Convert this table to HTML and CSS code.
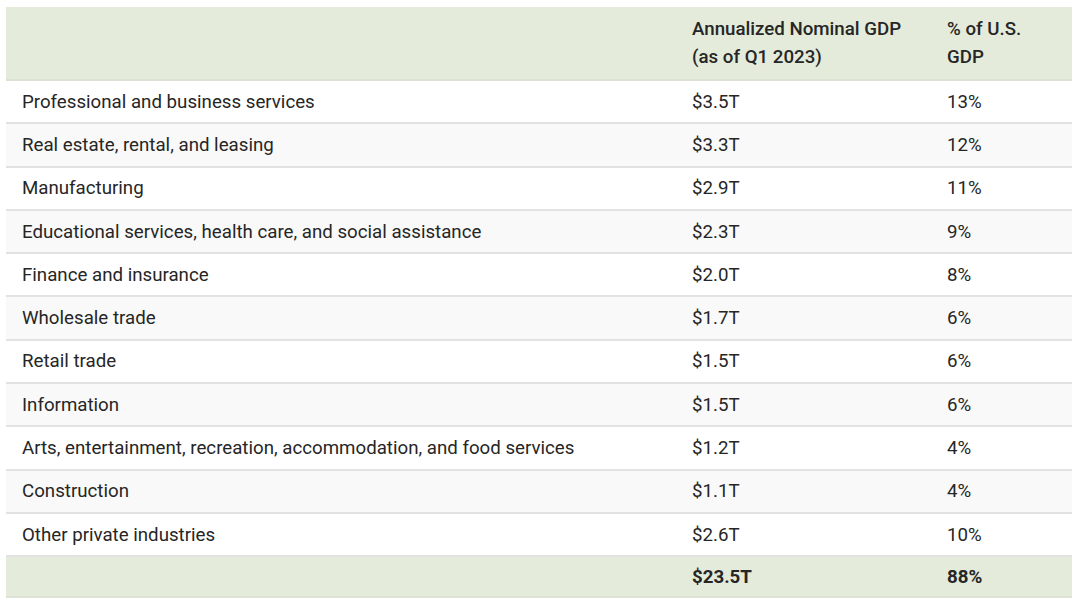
FILE: index.html
```html
<!DOCTYPE html>
<html>
<head>
<meta charset="utf-8">
<link rel="stylesheet" href="styles.css">
</head>
<body>
<div class="wrap">
<table class="gdp">
<colgroup><col class="k1"><col class="k2"><col class="k3"></colgroup>
<thead>
<tr><th></th><th>Annualized Nominal GDP<br>(as of Q1 2023)</th><th>% of U.S.<br>GDP</th></tr>
</thead>
<tbody>
<tr><td>Professional and business services</td><td>$3.5T</td><td>13%</td></tr>
<tr><td>Real estate, rental, and leasing</td><td>$3.3T</td><td>12%</td></tr>
<tr><td>Manufacturing</td><td>$2.9T</td><td>11%</td></tr>
<tr><td>Educational services, health care, and social assistance</td><td>$2.3T</td><td>9%</td></tr>
<tr><td>Finance and insurance</td><td>$2.0T</td><td>8%</td></tr>
<tr><td>Wholesale trade</td><td>$1.7T</td><td>6%</td></tr>
<tr><td>Retail trade</td><td>$1.5T</td><td>6%</td></tr>
<tr><td>Information</td><td>$1.5T</td><td>6%</td></tr>
<tr><td>Arts, entertainment, recreation, accommodation, and food services</td><td>$1.2T</td><td>4%</td></tr>
<tr><td>Construction</td><td>$1.1T</td><td>4%</td></tr>
<tr><td>Other private industries</td><td>$2.6T</td><td>10%</td></tr>
</tbody>
<tfoot>
<tr><td></td><td>$23.5T</td><td>88%</td></tr>
</tfoot>
</table>
</div>
</body>
</html>
```
FILE: styles.css
```css
html, body { margin: 0; padding: 0; background: #fff; }
.wrap { padding: 7px 8px 0 6px; }
.gdp {
  width: 1066px;
  border-collapse: collapse;
  font-family: Roboto, "Liberation Sans", sans-serif;
  font-size: 18.7px;
  color: #262626;
  table-layout: fixed;
}
.gdp .k1 { width: 670px; }
.gdp .k2 { width: 255px; }
.gdp .k3 { width: 141px; }
.gdp th {
  background: #e4ebda;
  text-align: left;
  font-weight: 500;
  line-height: 28px;
  padding: 8px 16px;
  height: 53px;
  border-bottom: 2px solid #dde3d4;
}
.gdp td {
  padding: 0 16px;
  height: 41.3px;
  line-height: 24px;
  border-bottom: 2px solid #e2e2e2;
}
.gdp tbody tr:nth-child(even) td { background: #f9f9f9; }
.gdp tfoot td {
  background: #e4ebda;
  font-weight: 700;
  height: 39px;
  border-bottom: 2px solid #dde3d4;
}
```
